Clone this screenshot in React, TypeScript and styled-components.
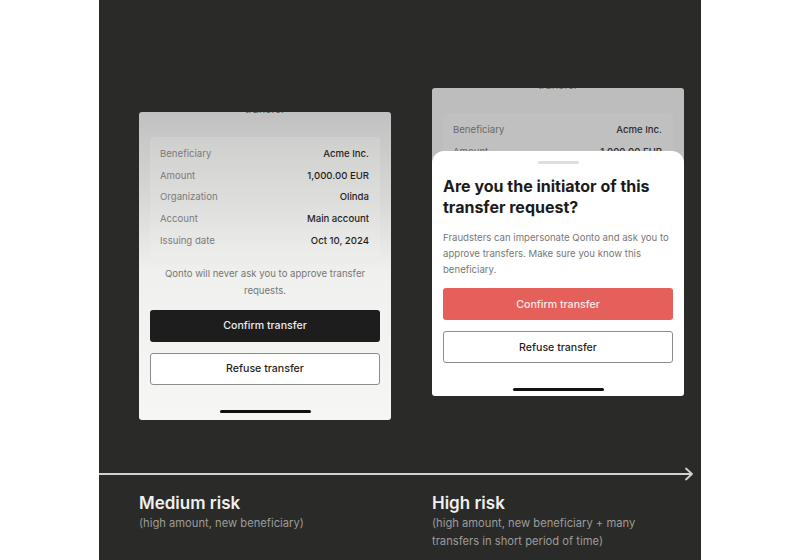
import styled, { createGlobalStyle, css } from 'styled-components';

const GlobalStyle = createGlobalStyle`
  html, body {
    margin: 0;
    padding: 0;
    background: #ffffff;
  }
  body {
    font-family: Inter, "Noto Sans", "Liberation Sans", sans-serif;
    -webkit-font-smoothing: antialiased;
  }
`;

const Page = styled.div`
  width: 800px;
  height: 560px;
  overflow: hidden;
  display: flex;
`;

const Panel = styled.section`
  margin-left: 99px;
  width: 602px;
  height: 560px;
  background: #2a2a28;
  display: flex;
  flex-direction: column;
`;

const Stage = styled.div`
  display: grid;
  grid-template-columns: 252px 252px;
  column-gap: 41px;
  padding: 88px 0 0 40px;
  height: 332px;
  box-sizing: border-box;
`;

const Phone = styled.div<{ $offset?: number; $dim?: boolean }>`
  position: relative;
  margin-top: ${(p) => p.$offset ?? 0}px;
  height: 308px;
  border-radius: 3px;
  overflow: hidden;
  display: flex;
  flex-direction: column;
  padding: 0 11px;
  box-sizing: border-box;
  ${(p) =>
    p.$dim
      ? css`
          background: #bdbdbd;
        `
      : css`
          background: linear-gradient(180deg, #c1c1c1 0%, #d9d9d7 30%, #f0f0ee 52%, #f6f6f4 100%);
        `}
`;

const ClippedTitle = styled.div<{ $dim?: boolean }>`
  margin-top: -9px;
  height: 12px;
  text-align: center;
  font-size: 11px;
  line-height: 12px;
  color: ${(p) => (p.$dim ? '#6e6e6e' : '#5a5a5a')};
`;

const Details = styled.div<{ $dim?: boolean }>`
  margin-top: 22px;
  padding: 6px 11px 6px 10px;
  border-radius: 4px;
  background: ${(p) => (p.$dim ? 'rgba(255,255,255,0.05)' : 'rgba(255,255,255,0.14)')};
  display: flex;
  flex-direction: column;
`;

const Row = styled.div<{ $dim?: boolean }>`
  height: 21.6px;
  display: flex;
  align-items: center;
  justify-content: space-between;
  font-size: 9.6px;
  span:first-child {
    color: ${(p) => (p.$dim ? '#6a6a6a' : '#7b7b7b')};
  }
  span:last-child {
    font-weight: 500;
    color: ${(p) => (p.$dim ? '#2c2c2c' : '#1f1f1f')};
  }
`;

const Note = styled.p`
  margin: 8px 6px 0;
  text-align: center;
  font-size: 9.6px;
  line-height: 17px;
  color: #777775;
`;

const Button = styled.div<{ $variant: 'dark' | 'danger' | 'outline' }>`
  height: 32px;
  border-radius: 3px;
  box-sizing: border-box;
  display: flex;
  align-items: center;
  justify-content: center;
  font-size: 10.6px;
  font-weight: 500;
  ${(p) =>
    p.$variant === 'dark' &&
    css`
      background: #1d1d1d;
      color: #ececec;
    `}
  ${(p) =>
    p.$variant === 'danger' &&
    css`
      background: #e5605a;
      color: #fde9e7;
    `}
  ${(p) =>
    p.$variant === 'outline' &&
    css`
      background: #ffffff;
      border: 1px solid #8c8c8c;
      color: #1f1f1f;
    `}
`;

const Actions = styled.div<{ $top: number }>`
  margin-top: ${(p) => p.$top}px;
  display: flex;
  flex-direction: column;
  gap: 11px;
`;

const HomeBar = styled.div<{ $top: number }>`
  margin: ${(p) => p.$top}px auto 0;
  width: 91px;
  height: 3px;
  border-radius: 2px;
  background: #111111;
`;

/* bottom sheet sliding over the dimmed screen */
const Sheet = styled.div`
  position: absolute;
  left: 0;
  right: 0;
  bottom: 0;
  height: 245px;
  background: #ffffff;
  border-radius: 12px 12px 3px 3px;
  padding: 0 11px;
  box-sizing: border-box;
  display: flex;
  flex-direction: column;
`;

const Grabber = styled.div`
  margin: 10px auto 0;
  width: 41px;
  height: 3px;
  border-radius: 2px;
  background: #dedede;
`;

const SheetTitle = styled.h2`
  margin: 12px 0 0;
  font-size: 16px;
  line-height: 21px;
  font-weight: 700;
  color: #1b1b1b;
`;

const SheetText = styled.p`
  margin: 12px 0 0;
  font-size: 9.6px;
  line-height: 16px;
  color: #777775;
`;

const Axis = styled.svg`
  display: block;
  margin-top: 135px;
`;

const Captions = styled.div`
  display: grid;
  grid-template-columns: 252px 252px;
  column-gap: 41px;
  padding: 11px 0 0 40px;
`;

const Caption = styled.div`
  display: flex;
  flex-direction: column;
`;

const CaptionTitle = styled.h3`
  margin: 0;
  font-size: 17px;
  line-height: 22px;
  font-weight: 600;
  color: #efefed;
`;

const CaptionText = styled.p`
  margin: 0;
  font-size: 11.2px;
  line-height: 18px;
  color: #9c9c9a;
`;

const rows: [string, string][] = [
  ['Beneficiary', 'Acme Inc.'],
  ['Amount', '1,000.00 EUR'],
  ['Organization', 'Olinda'],
  ['Account', 'Main account'],
  ['Issuing date', 'Oct 10, 2024'],
];

function DetailRows({ dim }: { dim?: boolean }) {
  return (
    <Details $dim={dim}>
      {rows.map(([label, value]) => (
        <Row key={label} $dim={dim}>
          <span>{label}</span>
          <span>{value}</span>
        </Row>
      ))}
    </Details>
  );
}

export default function App() {
  return (
    <>
      <GlobalStyle />
      <Page>
        <Panel>
          <Stage>
            <Phone $offset={24}>
              <ClippedTitle>transfer</ClippedTitle>
              <DetailRows />
              <Note>Qonto will never ask you to approve transfer requests.</Note>
              <Actions $top={11}>
                <Button $variant="dark">Confirm transfer</Button>
                <Button $variant="outline">Refuse transfer</Button>
              </Actions>
              <HomeBar $top={25} />
            </Phone>

            <Phone $dim>
              <ClippedTitle $dim>transfer</ClippedTitle>
              <DetailRows dim />
              <Sheet>
                <Grabber />
                <SheetTitle>
                  Are you the initiator of this
                  <br />
                  transfer request?
                </SheetTitle>
                <SheetText>
                  Fraudsters can impersonate Qonto and ask you to approve transfers. Make sure you know this
                  beneficiary.
                </SheetText>
                <Actions $top={10}>
                  <Button $variant="danger">Confirm transfer</Button>
                  <Button $variant="outline">Refuse transfer</Button>
                </Actions>
                <HomeBar $top={25} />
              </Sheet>
            </Phone>
          </Stage>

          <Axis width="602" height="14" viewBox="0 0 602 14">
            <line x1="0" y1="7" x2="592" y2="7" stroke="#d2d2d0" strokeWidth="2" />
            <polyline
              points="587,1.5 593,7 587,12.5"
              fill="none"
              stroke="#d2d2d0"
              strokeWidth="1.8"
              strokeLinecap="round"
              strokeLinejoin="round"
            />
          </Axis>

          <Captions>
            <Caption>
              <CaptionTitle>Medium risk</CaptionTitle>
              <CaptionText>(high amount, new beneficiary)</CaptionText>
            </Caption>
            <Caption>
              <CaptionTitle>High risk</CaptionTitle>
              <CaptionText>
                (high amount, new beneficiary + many
                <br />
                transfers in short period of time)
              </CaptionText>
            </Caption>
          </Captions>
        </Panel>
      </Page>
    </>
  );
}
